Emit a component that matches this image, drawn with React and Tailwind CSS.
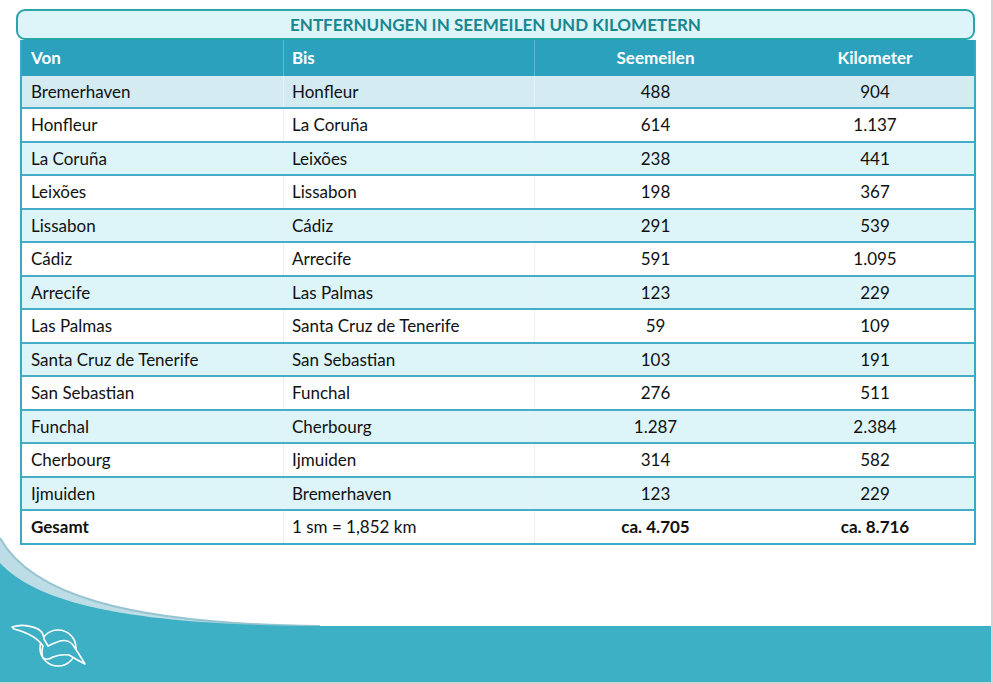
import React from "react";

const rows = [
  ["Bremerhaven", "Honfleur", "488", "904"],
  ["Honfleur", "La Coruña", "614", "1.137"],
  ["La Coruña", "Leixões", "238", "441"],
  ["Leixões", "Lissabon", "198", "367"],
  ["Lissabon", "Cádiz", "291", "539"],
  ["Cádiz", "Arrecife", "591", "1.095"],
  ["Arrecife", "Las Palmas", "123", "229"],
  ["Las Palmas", "Santa Cruz de Tenerife", "59", "109"],
  ["Santa Cruz de Tenerife", "San Sebastian", "103", "191"],
  ["San Sebastian", "Funchal", "276", "511"],
  ["Funchal", "Cherbourg", "1.287", "2.384"],
  ["Cherbourg", "Ijmuiden", "314", "582"],
  ["Ijmuiden", "Bremerhaven", "123", "229"],
];

function Gull() {
  return (
    <svg width="80" height="50" viewBox="0 0 80 50" className="absolute left-[8px] top-[620px]" fill="none" stroke="white" strokeWidth="1.6" strokeLinejoin="round" strokeLinecap="round">
      <circle cx="50" cy="28" r="18" />
      <path d="M4,7 Q16,3 30,9 Q36,13 36,19 L40,26 Q46,23 52,21 Q60,19 65,25 Q71,34 77,44 Q69,40 61,35 Q53,34 45,37 Q39,41 35,38 Q33,32 35,26 Q28,15 6,9 Z" fill="#3eb0c5" />
    </svg>
  );
}

export default function App() {
  return (
    <div className="relative w-[993px] h-[684px] bg-white overflow-hidden" style={{ fontFamily: "Lato, 'Open Sans', sans-serif" }}>
      <svg className="absolute inset-0 pointer-events-none" width="993" height="684" viewBox="0 0 993 684">
        <path d="M0,538 C30,592 120,624 320,626 L0,626 Z" fill="#bddde6" />
        <path d="M0,538 C30,592 120,624 320,626" fill="none" stroke="#97c4d1" strokeWidth="2" />
        <path d="M0,563 C40,606 140,625 320,626 L993,626 L993,684 L0,684 Z" fill="#3eb0c5" />
        <rect x="0" y="682" width="993" height="2" fill="#d4d4d4" />
        <rect x="991" y="0" width="2" height="684" fill="#d4d4d4" />
      </svg>
      <Gull />

      <div className="relative flex flex-col pt-[9px] pl-[16px]">
        <div className="w-[959px] h-[31px] rounded-[9px] border-2 border-[#2aa5a8] bg-[#ddf4f8] flex items-center justify-center">
          <span className="text-[17px] font-bold text-[#17868f] leading-none">ENTFERNUNGEN IN SEEMEILEN UND KILOMETERN</span>
        </div>
        <div className="ml-[4px] w-[956px] border-x-2 border-b-2 border-[#3aa9c5] text-[17px] text-[#111]">
          <div className="grid grid-cols-[261px_251px_242px_198px] h-[35.5px] bg-[#2ca1bd] text-white font-bold text-[17px]">
            <div className="flex items-center pl-[9px]">Von</div>
            <div className="flex items-center pl-[8px] border-l border-[#5fb9cf]">Bis</div>
            <div className="flex items-center justify-center border-l border-[#5fb9cf]">Seemeilen</div>
            <div className="flex items-center justify-center">Kilometer</div>
          </div>
          {rows.map((r, i) => (
            <div
              key={i}
              className={
                "grid grid-cols-[261px_251px_242px_198px] h-[33.5px] border-b-2 border-[#46acc8] " +
                (i === 0 ? "bg-[#d3ebf1]" : i % 2 === 0 ? "bg-[#ddf4f8]" : "bg-white")
              }
            >
              <div className="flex items-center pl-[9px]">{r[0]}</div>
              <div className="flex items-center pl-[8px] border-l border-[#e4f2f5]">{r[1]}</div>
              <div className="flex items-center justify-center border-l border-[#e4f2f5]">{r[2]}</div>
              <div className="flex items-center justify-center">{r[3]}</div>
            </div>
          ))}
          <div className="grid grid-cols-[261px_251px_242px_198px] h-[32px] bg-white">
            <div className="flex items-center pl-[9px] font-bold text-[17px]">Gesamt</div>
            <div className="flex items-center pl-[8px] border-l border-[#e4f2f5]">1 sm = 1,852 km</div>
            <div className="flex items-center justify-center border-l border-[#e4f2f5] font-bold text-[17px]">ca. 4.705</div>
            <div className="flex items-center justify-center font-bold text-[17px]">ca. 8.716</div>
          </div>
        </div>
      </div>
    </div>
  );
}
